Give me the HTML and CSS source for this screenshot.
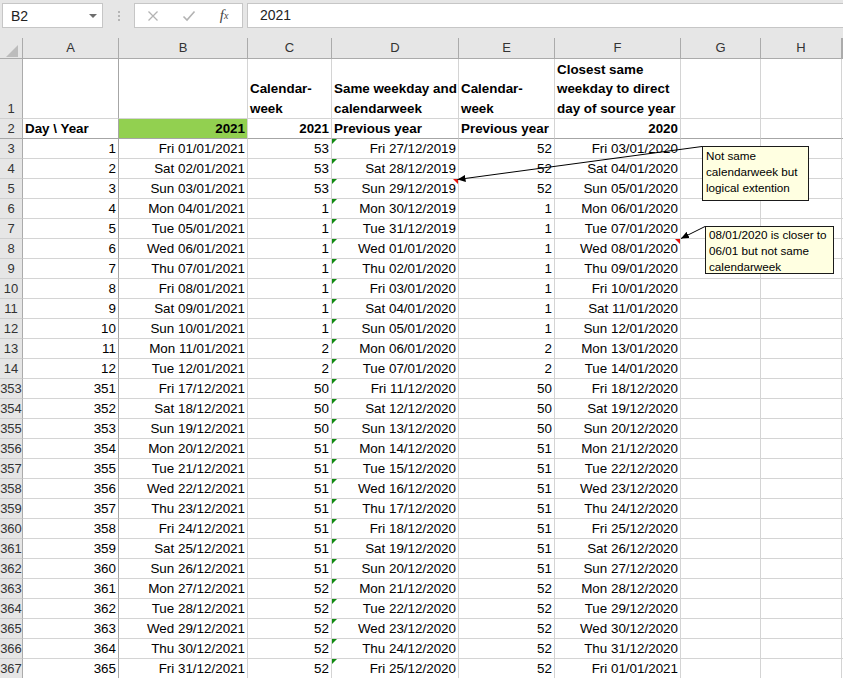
FILE: index.html
```html
<!DOCTYPE html>
<html lang="en">
<head>
<meta charset="utf-8">
<title>Sheet</title>
<link rel="stylesheet" href="styles.css">
</head>
<body>
<div class="app">
  <div class="fbar">
    <div class="namebox"><span>B2</span><span class="dd"></span></div>
    <div class="grip"><i></i><i></i><i></i></div>
    <div class="btns">
      <span class="slot"><svg width="12" height="12" viewBox="0 0 12 12"><path d="M1.5 1.5 L10.5 10.5 M10.5 1.5 L1.5 10.5" stroke="#b3b3b3" stroke-width="1.3" fill="none"/></svg></span>
      <span class="slot"><svg width="14" height="12" viewBox="0 0 14 12"><path d="M1.5 6.5 L5 10 L12.5 1.5" stroke="#b3b3b3" stroke-width="1.6" fill="none"/></svg></span>
      <span class="slot fx"><i>f</i><sub>x</sub></span>
    </div>
    <div class="input">2021</div>
  </div>

  <div class="sheet">
    <div class="row colhdr"><div class="corner"></div><div>A</div><div>B</div><div>C</div><div>D</div><div>E</div><div>F</div><div>G</div><div>H</div><div></div></div>
    <div class="row tall"><div>1</div><div></div><div></div><div class="l b">Calendar-<br>week</div><div class="l b">Same weekday and<br>calendarweek</div><div class="l b">Calendar-<br>week</div><div class="l b">Closest same<br>weekday to direct<br>day of source year</div><div></div><div></div><div></div></div>
    <div class="row frz"><div>2</div><div class="l b">Day \ Year</div><div class="b hi">2021</div><div class="b">2021</div><div class="l b">Previous year</div><div class="l b">Previous year</div><div class="b">2020</div><div></div><div></div><div></div></div>

    <div class="row data"><div>3</div><div>1</div><div>Fri 01/01/2021</div><div>53</div><div>Fri 27/12/2019</div><div>52</div><div>Fri 03/01/2020</div><div></div><div></div><div></div></div>
    <div class="row data"><div>4</div><div>2</div><div>Sat 02/01/2021</div><div>53</div><div>Sat 28/12/2019</div><div>52</div><div>Sat 04/01/2020</div><div></div><div></div><div></div></div>
    <div class="row data"><div>5</div><div>3</div><div>Sun 03/01/2021</div><div>53</div><div class="note">Sun 29/12/2019</div><div>52</div><div>Sun 05/01/2020</div><div></div><div></div><div></div></div>
    <div class="row data"><div>6</div><div>4</div><div>Mon 04/01/2021</div><div>1</div><div>Mon 30/12/2019</div><div>1</div><div>Mon 06/01/2020</div><div></div><div></div><div></div></div>
    <div class="row data"><div>7</div><div>5</div><div>Tue 05/01/2021</div><div>1</div><div>Tue 31/12/2019</div><div>1</div><div>Tue 07/01/2020</div><div></div><div></div><div></div></div>
    <div class="row data"><div>8</div><div>6</div><div>Wed 06/01/2021</div><div>1</div><div>Wed 01/01/2020</div><div>1</div><div class="note">Wed 08/01/2020</div><div></div><div></div><div></div></div>
    <div class="row data"><div>9</div><div>7</div><div>Thu 07/01/2021</div><div>1</div><div>Thu 02/01/2020</div><div>1</div><div>Thu 09/01/2020</div><div></div><div></div><div></div></div>
    <div class="row data"><div>10</div><div>8</div><div>Fri 08/01/2021</div><div>1</div><div>Fri 03/01/2020</div><div>1</div><div>Fri 10/01/2020</div><div></div><div></div><div></div></div>
    <div class="row data"><div>11</div><div>9</div><div>Sat 09/01/2021</div><div>1</div><div>Sat 04/01/2020</div><div>1</div><div>Sat 11/01/2020</div><div></div><div></div><div></div></div>
    <div class="row data"><div>12</div><div>10</div><div>Sun 10/01/2021</div><div>1</div><div>Sun 05/01/2020</div><div>1</div><div>Sun 12/01/2020</div><div></div><div></div><div></div></div>
    <div class="row data"><div>13</div><div>11</div><div>Mon 11/01/2021</div><div>2</div><div>Mon 06/01/2020</div><div>2</div><div>Mon 13/01/2020</div><div></div><div></div><div></div></div>
    <div class="row data"><div>14</div><div>12</div><div>Tue 12/01/2021</div><div>2</div><div>Tue 07/01/2020</div><div>2</div><div>Tue 14/01/2020</div><div></div><div></div><div></div></div>
    <div class="row data"><div>353</div><div>351</div><div>Fri 17/12/2021</div><div>50</div><div>Fri 11/12/2020</div><div>50</div><div>Fri 18/12/2020</div><div></div><div></div><div></div></div>
    <div class="row data"><div>354</div><div>352</div><div>Sat 18/12/2021</div><div>50</div><div>Sat 12/12/2020</div><div>50</div><div>Sat 19/12/2020</div><div></div><div></div><div></div></div>
    <div class="row data"><div>355</div><div>353</div><div>Sun 19/12/2021</div><div>50</div><div>Sun 13/12/2020</div><div>50</div><div>Sun 20/12/2020</div><div></div><div></div><div></div></div>
    <div class="row data"><div>356</div><div>354</div><div>Mon 20/12/2021</div><div>51</div><div>Mon 14/12/2020</div><div>51</div><div>Mon 21/12/2020</div><div></div><div></div><div></div></div>
    <div class="row data"><div>357</div><div>355</div><div>Tue 21/12/2021</div><div>51</div><div>Tue 15/12/2020</div><div>51</div><div>Tue 22/12/2020</div><div></div><div></div><div></div></div>
    <div class="row data"><div>358</div><div>356</div><div>Wed 22/12/2021</div><div>51</div><div>Wed 16/12/2020</div><div>51</div><div>Wed 23/12/2020</div><div></div><div></div><div></div></div>
    <div class="row data"><div>359</div><div>357</div><div>Thu 23/12/2021</div><div>51</div><div>Thu 17/12/2020</div><div>51</div><div>Thu 24/12/2020</div><div></div><div></div><div></div></div>
    <div class="row data"><div>360</div><div>358</div><div>Fri 24/12/2021</div><div>51</div><div>Fri 18/12/2020</div><div>51</div><div>Fri 25/12/2020</div><div></div><div></div><div></div></div>
    <div class="row data"><div>361</div><div>359</div><div>Sat 25/12/2021</div><div>51</div><div>Sat 19/12/2020</div><div>51</div><div>Sat 26/12/2020</div><div></div><div></div><div></div></div>
    <div class="row data"><div>362</div><div>360</div><div>Sun 26/12/2021</div><div>51</div><div>Sun 20/12/2020</div><div>51</div><div>Sun 27/12/2020</div><div></div><div></div><div></div></div>
    <div class="row data"><div>363</div><div>361</div><div>Mon 27/12/2021</div><div>52</div><div>Mon 21/12/2020</div><div>52</div><div>Mon 28/12/2020</div><div></div><div></div><div></div></div>
    <div class="row data"><div>364</div><div>362</div><div>Tue 28/12/2021</div><div>52</div><div>Tue 22/12/2020</div><div>52</div><div>Tue 29/12/2020</div><div></div><div></div><div></div></div>
    <div class="row data"><div>365</div><div>363</div><div>Wed 29/12/2021</div><div>52</div><div>Wed 23/12/2020</div><div>52</div><div>Wed 30/12/2020</div><div></div><div></div><div></div></div>
    <div class="row data"><div>366</div><div>364</div><div>Thu 30/12/2021</div><div>52</div><div>Thu 24/12/2020</div><div>52</div><div>Thu 31/12/2020</div><div></div><div></div><div></div></div>
    <div class="row data"><div>367</div><div>365</div><div>Fri 31/12/2021</div><div>52</div><div>Fri 25/12/2020</div><div>52</div><div>Fri 01/01/2021</div><div></div><div></div><div></div></div>
  </div>

  <svg class="arrows" width="843" height="678" viewBox="0 0 843 678">
    <defs>
      <marker id="ah" markerUnits="userSpaceOnUse" markerWidth="9" markerHeight="7" refX="8" refY="3.5" orient="auto">
        <path d="M0 0 L8 3.5 L0 7 Z" fill="#000"/>
      </marker>
    </defs>
    <line x1="702" y1="146.5" x2="457.5" y2="179.5" stroke="#000" stroke-width="1" marker-end="url(#ah)"/>
    <line x1="705" y1="226.5" x2="681" y2="238.5" stroke="#000" stroke-width="1" marker-end="url(#ah)"/>
  </svg>

  <div class="comment c1">Not same<br>calendarweek but<br>logical extention</div>
  <div class="comment c2">08/01/2020 is closer to<br>06/01 but not same<br>calendarweek</div>
</div>
</body>
</html>
```

FILE: styles.css
```css
* {
  box-sizing: border-box;
  margin: 0;
  padding: 0;
}

html, body {
  width: 843px;
  height: 678px;
  overflow: hidden;
  background: #ffffff;
}

body {
  font-family: "Liberation Sans", Arial, sans-serif;
  color: #000;
}

.app {
  position: relative;
  width: 843px;
  height: 678px;
  overflow: hidden;
}

/* ---------- formula bar ---------- */
.fbar {
  height: 38px;
  background: #e6e6e6;
  display: flex;
  align-items: flex-start;
  padding: 3px 0 0 2px;
}

.namebox {
  width: 101px;
  height: 25px;
  background: #fff;
  border: 1px solid #c6c6c6;
  display: flex;
  align-items: center;
  justify-content: space-between;
  padding: 0 5px 0 8px;
  font-size: 14px;
  color: #222;
}

.dd {
  width: 0;
  height: 0;
  border-left: 4px solid transparent;
  border-right: 4px solid transparent;
  border-top: 4px solid #6d6d6d;
}

.grip {
  width: 31px;
  height: 25px;
  display: flex;
  flex-direction: column;
  align-items: center;
  gap: 2px;
  padding-top: 8px;
}

.grip i {
  display: block;
  width: 2px;
  height: 2px;
  background: #b5b5b5;
}

.btns {
  width: 109px;
  height: 25px;
  background: #fff;
  border: 1px solid #c6c6c6;
  display: flex;
  align-items: center;
}

.slot {
  width: 36px;
  display: flex;
  justify-content: center;
  align-items: center;
}

.fx {
  font-family: "Liberation Serif", "Times New Roman", serif;
  font-size: 15px;
  color: #444;
  font-style: italic;
  line-height: 1;
}

.fx i {
  font-style: italic;
}

.fx sub {
  font-size: 10px;
  vertical-align: -1px;
}

.input {
  flex: 1;
  height: 25px;
  margin-left: 4px;
  background: #fff;
  border: 1px solid #c6c6c6;
  border-right: none;
  padding-left: 12px;
  font-size: 14px;
  line-height: 23px;
  color: #222;
}

/* ---------- sheet ---------- */
.row {
  display: grid;
  grid-template-columns: 23px 96px 129px 84px 127px 96px 126px 80px 81px 1fr;
  height: 20px;
}

.row > div {
  position: relative;
  display: flex;
  align-items: flex-end;
  justify-content: flex-end;
  padding: 0 2px 0 2px;
  border-right: 1px solid #d4d4d4;
  border-bottom: 1px solid #d4d4d4;
  white-space: nowrap;
  overflow: hidden;
  font-size: 13.4px;
  line-height: 19px;
}

.row > .l {
  justify-content: flex-start;
}

.row > .b {
  font-weight: bold;
}

.row > .hi {
  background: #92d050;
}

/* row headers */
.row > div:first-child {
  background: #e6e6e6;
  border-right-color: #ababab;
  border-bottom-color: #cfcfcf;
  justify-content: center;
  padding: 0;
  font-size: 13px;
  color: #333;
}

/* frozen pane lines */
.row > div:nth-child(2) {
  border-right-color: #a6a6a6;
}

.frz > div {
  border-bottom-color: #a6a6a6 !important;
}

/* column headers */
.colhdr {
  height: 21px;
}

.colhdr > div {
  background: #e6e6e6;
  justify-content: center;
  align-items: center;
  padding: 0;
  font-size: 13px;
  color: #333;
  border-right-color: #ababab !important;
  border-bottom-color: #ababab !important;
  line-height: 20px;
}

.corner::after {
  content: "";
  position: absolute;
  right: 4px;
  bottom: 1px;
  width: 0;
  height: 0;
  border-left: 12px solid transparent;
  border-bottom: 12px solid #bcbcbc;
}

/* tall header row */
.tall {
  height: 60px;
}

.tall > div {
  line-height: 19.5px;
}

/* indicators */
.data > div:nth-child(5)::before {
  content: "";
  position: absolute;
  left: 0;
  top: 0;
  width: 0;
  height: 0;
  border-top: 5px solid #118a11;
  border-right: 5px solid transparent;
}

.row > .note::after {
  content: "";
  position: absolute;
  right: 0;
  top: 0;
  width: 0;
  height: 0;
  border-top: 5px solid #e8140c;
  border-left: 5px solid transparent;
}

/* comments */
.arrows {
  position: absolute;
  left: 0;
  top: 0;
  pointer-events: none;
}

.comment {
  position: absolute;
  background: #ffffe1;
  border: 1px solid #1a1a1a;
  font-size: 11.7px;
  line-height: 16px;
  padding: 0 0 0 3px;
  white-space: nowrap;
  color: #000;
}

.c1 {
  left: 702px;
  top: 146px;
  width: 107px;
  height: 55px;
  padding-top: 1px;
}

.c2 {
  left: 705px;
  top: 226px;
  width: 129px;
  height: 48px;
}
```
